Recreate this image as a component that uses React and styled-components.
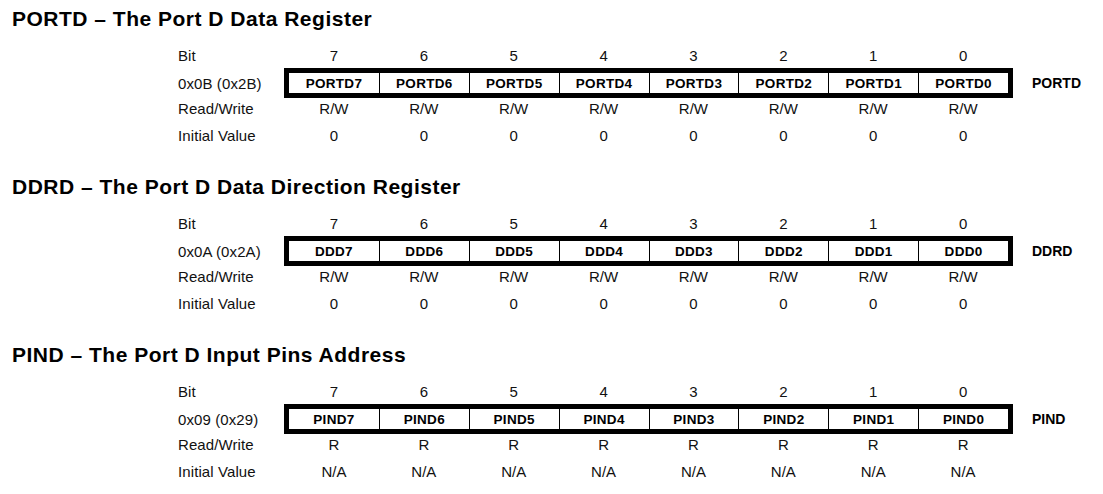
import React from "react";
import styled, { createGlobalStyle } from "styled-components";

const GlobalStyle = createGlobalStyle`
  body {
    margin: 0;
    background: #fff;
    font-family: "Liberation Sans", Arial, sans-serif;
    color: #000;
  }
`;

const Page = styled.div`
  width: 1103px;
  height: 494px;
  padding: 7px 0 0 12px;
  box-sizing: border-box;
  overflow: hidden;
`;

const Section = styled.section`
  margin-bottom: 24px;
`;

const Title = styled.h2`
  margin: 0 0 11px;
  font-size: 21px;
  letter-spacing: 0.5px;
  line-height: 24px;
  font-weight: bold;
  white-space: nowrap;
`;

const Table = styled.div`
  padding-left: 166px;
  display: flex;
  flex-direction: column;
`;

const Row = styled.div`
  display: flex;
  align-items: center;
  height: ${(p) => p.h}px;
`;

const Label = styled.div`
  width: 106px;
  flex-shrink: 0;
  font-size: 15px;
  letter-spacing: 0.1px;
  color: #111;
  white-space: nowrap;
`;

const Cells = styled.div`
  width: 729px;
  flex-shrink: 0;
  height: 100%;
  box-sizing: border-box;
  display: grid;
  grid-template-columns: repeat(8, 1fr);
  border-style: solid;
  border-color: ${(p) => (p.boxed ? "#000" : "transparent")};
  border-width: 5px;
  border-top-width: ${(p) => (p.boxed ? "5px" : "0")};
  border-bottom-width: ${(p) => (p.boxed ? "5px" : "0")};
`;

const Cell = styled.div`
  display: flex;
  align-items: center;
  justify-content: center;
  font-size: 15px;
  color: #111;
`;

const BitCell = styled(Cell)`
  font-size: 13.5px;
  letter-spacing: 0.3px;
  font-weight: bold;
  color: #000;
  border-left: 1px solid #000;
  &:first-child {
    border-left: none;
  }
`;

const RegName = styled.div`
  margin-left: 19px;
  flex-shrink: 0;
  font-size: 14px;
  font-weight: bold;
`;

const bits = [7, 6, 5, 4, 3, 2, 1, 0];

const registers = [
  {
    title: "PORTD – The Port D Data Register",
    name: "PORTD",
    address: "0x0B (0x2B)",
    prefix: "PORTD",
    access: "R/W",
    init: "0",
  },
  {
    title: "DDRD – The Port D Data Direction Register",
    name: "DDRD",
    address: "0x0A (0x2A)",
    prefix: "DDD",
    access: "R/W",
    init: "0",
  },
  {
    title: "PIND – The Port D Input Pins Address",
    name: "PIND",
    address: "0x09 (0x29)",
    prefix: "PIND",
    access: "R",
    init: "N/A",
  },
];

function Register({ reg }) {
  return (
    <Section>
      <Title>{reg.title}</Title>
      <Table>
        <Row h={26}>
          <Label>Bit</Label>
          <Cells>
            {bits.map((b) => (
              <Cell key={b}>{b}</Cell>
            ))}
          </Cells>
        </Row>
        <Row h={30}>
          <Label>{reg.address}</Label>
          <Cells boxed>
            {bits.map((b) => (
              <BitCell key={b}>
                {reg.prefix}
                {b}
              </BitCell>
            ))}
          </Cells>
          <RegName>{reg.name}</RegName>
        </Row>
        <Row h={21}>
          <Label>Read/Write</Label>
          <Cells>
            {bits.map((b) => (
              <Cell key={b}>{reg.access}</Cell>
            ))}
          </Cells>
        </Row>
        <Row h={32}>
          <Label>Initial Value</Label>
          <Cells>
            {bits.map((b) => (
              <Cell key={b}>{reg.init}</Cell>
            ))}
          </Cells>
        </Row>
      </Table>
    </Section>
  );
}

export default function App() {
  return (
    <>
      <GlobalStyle />
      <Page>
        {registers.map((r) => (
          <Register key={r.name} reg={r} />
        ))}
      </Page>
    </>
  );
}
